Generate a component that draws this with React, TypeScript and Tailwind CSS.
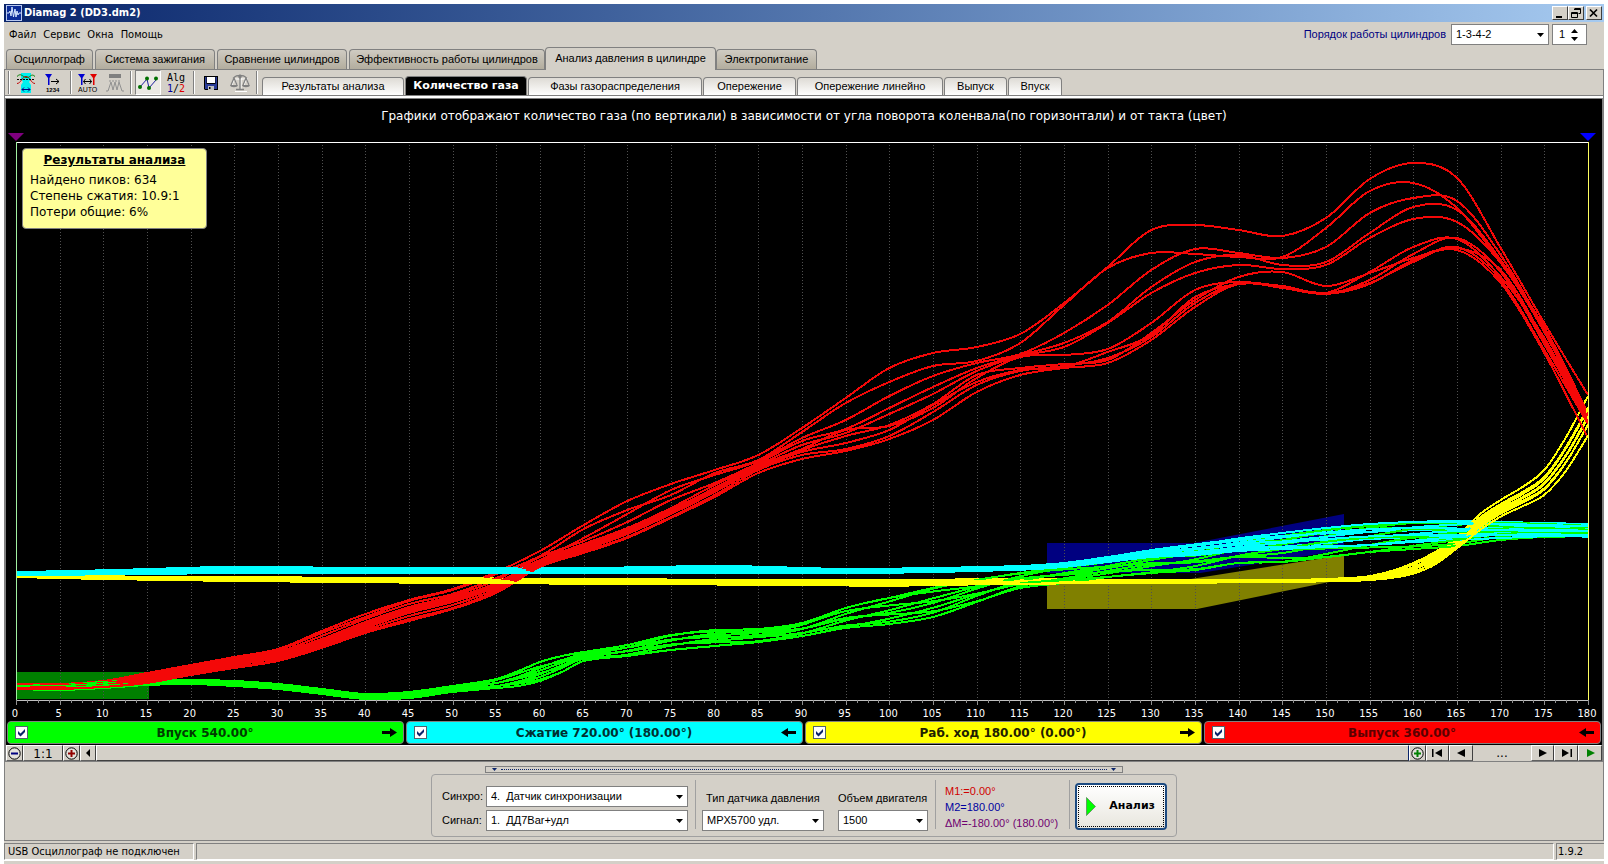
import { ReactNode, SelectHTMLAttributes, useState } from "react";

const MAIN_TABS = [
  { label: "Осциллограф", width: "w-[87px]" },
  { label: "Система зажигания", width: "w-[120px]" },
  { label: "Сравнение цилиндров", width: "w-[130px]" },
  { label: "Эффективность работы цилиндров", width: "w-[196px]" },
  { label: "Анализ давления в цилиндре", width: "w-[171px]" },
  { label: "Электропитание", width: "w-[101px]" },
];

const SUB_TABS = [
  { label: "Результаты анализа", width: "w-[142px]" },
  { label: "Количество газа", width: "w-[122px]" },
  { label: "Фазы газораспределения", width: "w-[174px]" },
  { label: "Опережение", width: "w-[93px]" },
  { label: "Опережение линейно", width: "w-[146px]" },
  { label: "Выпуск", width: "w-[63px]" },
  { label: "Впуск", width: "w-[54px]" },
];

const STROKES = [
  { label: "Впуск 540.00°", bg: "bg-[#00ff00]", text: "text-[#003c00]", dir: "right" },
  { label: "Сжатие 720.00° (180.00°)", bg: "bg-[#00ffff]", text: "text-[#003030]", dir: "left" },
  { label: "Раб. ход 180.00° (0.00°)", bg: "bg-[#ffff00]", text: "text-[#202000]", dir: "right" },
  { label: "Выпуск 360.00°", bg: "bg-[#ff0000]", text: "text-[#5a0000]", dir: "left" },
];

// plot geometry, px
const PLOT_W = 1572;
const PLOT_TOP = 142;
const PLOT_BOTTOM = 700;
const STEP = PLOT_W / 36; // 5 degrees
const CYCLES = 10;

type Point = [deg: number, y: number];
type Band = [deg: number, upper: number, lower: number][];

// exhaust stroke, one row per cycle, one sample per 5 degrees
const EXHAUST = [
  [684, 684, 681, 673, 665, 657, 649, 631, 614, 600, 589, 572, 551, 525, 501, 484, 470, 455, 428, 398, 368, 353, 347, 334, 303, 267, 230, 225, 230, 236, 218, 179, 163, 178, 248, 323, 395],
  [685, 685, 682, 675, 667, 659, 650, 633, 617, 601, 590, 574, 556, 529, 510, 495, 473, 460, 432, 403, 382, 366, 361, 343, 305, 268, 253, 254, 257, 257, 228, 191, 183, 208, 263, 327, 413],
  [686, 685, 683, 677, 668, 660, 652, 636, 619, 604, 594, 578, 560, 538, 514, 490, 475, 461, 438, 420, 396, 376, 363, 354, 333, 305, 270, 249, 253, 258, 247, 213, 198, 201, 255, 330, 416],
  [685, 686, 684, 678, 669, 661, 653, 639, 622, 607, 596, 580, 557, 541, 522, 500, 483, 463, 441, 429, 408, 387, 368, 355, 343, 322, 287, 262, 255, 265, 262, 233, 207, 210, 260, 330, 417],
  [686, 686, 684, 679, 670, 662, 654, 641, 624, 609, 598, 583, 560, 544, 528, 508, 485, 465, 445, 433, 414, 394, 371, 356, 347, 323, 293, 273, 265, 269, 265, 238, 219, 222, 263, 332, 418],
  [687, 687, 685, 679, 671, 663, 655, 642, 626, 611, 600, 585, 562, 546, 530, 510, 488, 466, 449, 430, 426, 408, 378, 357, 355, 349, 323, 290, 282, 287, 293, 272, 247, 239, 277, 338, 420],
  [687, 687, 685, 680, 672, 664, 656, 643, 628, 613, 602, 587, 563, 548, 532, 512, 490, 467, 450, 436, 425, 404, 375, 368, 364, 360, 333, 300, 277, 272, 286, 273, 258, 248, 270, 340, 421],
  [688, 688, 686, 681, 673, 665, 658, 645, 630, 616, 605, 589, 564, 550, 534, 514, 492, 468, 452, 443, 430, 405, 382, 370, 367, 352, 335, 297, 284, 286, 294, 280, 254, 238, 272, 344, 422],
  [688, 688, 687, 682, 674, 667, 660, 647, 632, 619, 608, 591, 566, 552, 537, 517, 495, 470, 455, 449, 436, 412, 385, 371, 366, 358, 337, 303, 283, 287, 293, 283, 262, 247, 280, 350, 424],
  [689, 689, 687, 683, 675, 668, 661, 648, 633, 621, 609, 593, 567, 553, 538, 518, 497, 473, 459, 451, 439, 420, 392, 375, 368, 363, 340, 307, 284, 288, 294, 284, 260, 250, 283, 353, 438],
];

// the other strokes are bundles: degrees, upper edge, lower edge
const INTAKE: Band = [
  [0, 685, 689], [5, 685, 690], [10, 682, 688], [15, 680, 685], [20, 680, 684], [25, 681, 686], [30, 684, 689],
  [35, 689, 694], [40, 694, 699], [45, 692, 698], [50, 686, 692], [55, 679, 688], [57.5, 671, 686], [60, 662, 681],
  [62.5, 656, 672], [65, 652, 661], [70, 645, 656], [75, 635, 650], [80, 630, 646], [85, 629, 642], [90, 623, 636],
  [95, 608, 628], [100, 598, 624], [105, 588, 617], [110, 580, 602], [115, 573, 588], [120, 567, 583],
  [125, 562, 577], [130, 554, 573], [135, 550, 570], [140, 543, 563], [145, 536, 562], [150, 530, 557],
  [155, 526, 552], [160, 523, 549], [165, 523, 546], [170, 523, 540], [175, 524, 537], [180, 525, 536],
];

const COMPRESSION: Band = [
  [0, 572, 575], [15, 569, 574], [25, 567, 573], [60, 568, 573], [80, 566, 573], [95, 569, 573], [105, 568, 572],
  [115, 566, 570], [120, 563, 567], [125, 557, 562], [130, 550, 557], [135, 544, 555], [140, 538, 551],
  [145, 533, 549], [150, 528, 547], [155, 524, 545], [160, 522, 542], [165, 521, 540], [170, 522, 538],
  [175, 523, 537], [180, 524, 537],
];

const POWER: Band = [
  [0, 573, 577], [10, 576, 579], [25, 577, 581], [45, 578, 583], [70, 579, 584], [90, 580, 585], [100, 580, 586],
  [115, 579, 584], [130, 580, 583], [145, 580, 582], [152.5, 578, 581], [155, 576, 580], [157.5, 571, 578],
  [160, 563, 574], [162.5, 552, 565], [165, 537, 549], [167.5, 515, 532], [170, 500, 518], [172.5, 487, 508],
  [175, 470, 497], [177.5, 437, 473], [180, 396, 438],
];

const EVEN = [0, 0.11, 0.22, 0.33, 0.44, 0.56, 0.67, 0.78, 0.89, 1];
const CENTERED = [0, 0.2, 0.3, 0.38, 0.45, 0.5, 0.56, 0.62, 0.7, 1];

function xOf(deg: number) {
  return (deg * STEP) / 5;
}

function curve(points: Point[]) {
  const p = points.map(([deg, y]) => [xOf(deg), y]);
  const last = p.length - 1;
  const slope = (i: number) => {
    const a = p[Math.max(i - 1, 0)];
    const b = p[Math.min(i + 1, last)];
    return (b[1] - a[1]) / (b[0] - a[0]);
  };
  let d = `M${p[0][0]} ${p[0][1]}`;
  for (let i = 0; i < last; i++) {
    const h = (p[i + 1][0] - p[i][0]) / 3;
    d += `C${(p[i][0] + h).toFixed(1)} ${(p[i][1] + slope(i) * h).toFixed(1)} `;
    d += `${(p[i + 1][0] - h).toFixed(1)} ${(p[i + 1][1] - slope(i + 1) * h).toFixed(1)} `;
    d += `${p[i + 1][0].toFixed(1)} ${p[i + 1][1].toFixed(1)}`;
  }
  return d;
}

// place one cycle between the edges of its bundle, with a slow drift so cycles cross
function fromBand(band: Band, cycle: number, weights: number[], drift: number) {
  return band.map(([deg, upper, lower]): Point => {
    const w = weights[cycle] + drift * Math.sin(deg * 0.1 + cycle * 2.1);
    return [deg, upper + (lower - upper) * Math.min(1, Math.max(0, w))];
  });
}

export default function App() {
  const [mainTab, setMainTab] = useState(4);
  const [subTab, setSubTab] = useState(1);

  return (
    <div className="min-h-screen bg-white px-1 pt-1 font-['Liberation_Sans',Arial,sans-serif] text-[11px] text-black">
      <div className="flex min-h-[860px] flex-col bg-[#d4d0c8] pb-[3px]">
        <TitleBar />
        <MenuBar />

        <nav className="flex h-[22px] items-end gap-0.5 pl-0.5">
          {MAIN_TABS.map((t, i) => (
            <button
              key={t.label}
              onClick={() => setMainTab(i)}
              className={`${t.width} shrink-0 whitespace-nowrap rounded-t border border-b-0 border-[#808080] text-center ${
                i === mainTab
                  ? "relative -mx-0.5 -mb-px h-[23px] bg-[#d4d0c8] pb-0.5"
                  : "h-5 bg-linear-to-b from-[#cfcbc2] to-[#b3ad9e]"
              }`}
            >
              {t.label}
            </button>
          ))}
        </nav>

        <main className="flex flex-1 flex-col border border-[#808080]">
          <div className="flex h-[25px] shrink-0">
            <Toolbar />
            <nav className="flex items-end gap-px pl-1">
              {SUB_TABS.map((t, i) => (
                <button
                  key={t.label}
                  onClick={() => setSubTab(i)}
                  className={`${t.width} shrink-0 whitespace-nowrap rounded-t border border-b-0 border-[#808080] ${
                    i === subTab
                      ? "h-[19px] bg-black font-['DejaVu_Sans'] font-bold text-white"
                      : "h-[18px] bg-linear-to-b from-[#dedbd5] to-white"
                  }`}
                >
                  {t.label}
                </button>
              ))}
            </nav>
          </div>
          <div className="h-1 shrink-0 border-y border-[#808080] bg-white" />

          <section className="relative border-x border-[#808080] bg-black">
            <h1 className="flex h-[31px] items-center justify-center pt-0.5 font-['DejaVu_Sans'] text-xs text-white">
              Графики отображают количество газа (по вертикали) в зависимости от угла поворота коленвала(по горизонтали) и от такта (цвет)
            </h1>
            <Chart />
            <ResultsNote />
            <div className="flex gap-0.5 px-px pb-px">
              {STROKES.map((s) => (
                <label
                  key={s.label}
                  className={`flex h-[23px] flex-1 items-center rounded border border-[#808080] px-1.5 ${s.bg}`}
                >
                  <span className="relative ml-px flex size-[13px]">
                    <input
                      type="checkbox"
                      defaultChecked
                      className="peer size-[13px] appearance-none border border-[#50646e] bg-white"
                    />
                    <svg viewBox="0 0 13 13" className="pointer-events-none absolute inset-0 hidden size-[13px] peer-checked:block">
                      <path d="M3 5v3l2.500 2.500L10 6V3L5.500 7.500z" fill="#0a246a" />
                    </svg>
                  </span>
                  <span className={`flex-1 text-center font-['DejaVu_Sans'] text-xs font-bold ${s.text}`}>{s.label}</span>
                  <svg viewBox="0 0 15 9" className={`h-[9px] w-[15px] ${s.dir === "left" ? "-scale-x-100" : ""}`}>
                    <path d="M0 3h8V0l7 4.500L8 9V6H0z" fill="#000" />
                  </svg>
                </label>
              ))}
            </div>
          </section>

          <ScrollRow />
          <ControlPanel />
        </main>

        <footer className="mt-0.5 flex h-[18px] shrink-0 gap-0.5 border-b border-white font-['DejaVu_Sans_Condensed','DejaVu_Sans'] leading-4">
          <div className="w-[190px] border border-[#808080] border-r-white border-b-white pl-[3px]">USB Осциллограф не подключен</div>
          <div className="flex-1 border border-[#808080] border-r-white border-b-white" />
          <div className="w-12 border border-r-0 border-[#808080] border-b-white pl-px">1.9.2</div>
        </footer>
      </div>
    </div>
  );
}

function TitleBar() {
  return (
    <header className="flex h-[18px] shrink-0 items-center bg-linear-to-r from-[#0a246a] to-[#a6caf0] pr-0.5">
      <svg viewBox="0 0 16 16" className="ml-0.5 size-4">
        <rect width="16" height="16" fill="#b8c8f0" />
        <rect x="1" y="1" width="14" height="14" fill="#0c2c98" />
        <path d="M1 8h2l1-2 1 5 1-9 1.500 10L9 4l1 8 1-6 1 4 1-2h2" fill="none" stroke="#d8e8ff" strokeWidth="1" />
      </svg>
      <span className="flex-1 pl-0.5 font-['DejaVu_Sans_Condensed','DejaVu_Sans'] font-bold text-white">Diamag 2 (DD3.dm2)</span>
      <WinButton label="Свернуть">
        <path d="M3 9h6v2H3z" fill="#000" />
      </WinButton>
      <WinButton label="Восстановить">
        <path d="M5.500 1.500h6v5h-2M5 2.500h7M2.500 5.500h6v5h-6zM2 6.500h7" fill="none" stroke="#000" />
      </WinButton>
      <span className="w-0.5" />
      <WinButton label="Закрыть">
        <path d="M3 2.500l7 7M10 2.500l-7 7" fill="none" stroke="#000" strokeWidth="1.700" />
      </WinButton>
    </header>
  );
}

function WinButton({ label, children }: { label: string; children: ReactNode }) {
  return (
    <button
      aria-label={label}
      className="h-3.5 w-4 border border-white border-r-[#404040] border-b-[#404040] bg-[#d4d0c8]"
    >
      <svg viewBox="0 0 14 12" className="h-3 w-3.5">
        {children}
      </svg>
    </button>
  );
}

function MenuBar() {
  return (
    <div className="flex h-[25px] shrink-0 items-center justify-between pr-[17px] pl-[5px]">
      <div className="flex gap-[7px] pt-0.5 font-['DejaVu_Sans_Condensed','DejaVu_Sans']">
        {["Файл", "Сервис", "Окна", "Помощь"].map((m) => (
          <button key={m}>{m}</button>
        ))}
      </div>
      <div className="flex items-center">
        <label htmlFor="order" className="pr-[5px] text-[#000080]">
          Порядок работы цилиндров
        </label>
        <Select id="order" width="w-[98px]" options={["1-3-4-2", "1-2-4-3"]} />
        <div className="ml-[3px] flex h-[21px] w-[35px] border border-[#808080] bg-white">
          <input aria-label="Цилиндр" defaultValue="1" className="w-[18px] bg-transparent pl-1.5 outline-none" />
          <div className="flex flex-col items-center justify-center gap-1">
            <button aria-label="Больше">
              <svg viewBox="0 0 7 4" className="h-1 w-[7px]">
                <path d="M0 4h7L3.500 0z" />
              </svg>
            </button>
            <button aria-label="Меньше">
              <svg viewBox="0 0 7 4" className="h-1 w-[7px]">
                <path d="M0 0h7L3.500 4z" />
              </svg>
            </button>
          </div>
        </div>
      </div>
    </div>
  );
}

type SelectProps = SelectHTMLAttributes<HTMLSelectElement> & { width: string; options: string[] };

function Select({ width, options, ...rest }: SelectProps) {
  return (
    <span className={`relative block ${width}`}>
      <select
        {...rest}
        className="block h-[21px] w-full appearance-none border border-[#808080] bg-white pr-4 pb-px pl-1 outline-none"
      >
        {options.map((o) => (
          <option key={o}>{o}</option>
        ))}
      </select>
      <svg viewBox="0 0 7 4" className="pointer-events-none absolute top-[9px] right-[5px] h-1 w-[7px]">
        <path d="M0 0h7L3.500 4z" />
      </svg>
    </span>
  );
}

function Separator() {
  return <span className="h-[23px] w-0.5 border-r border-l border-[#808080] border-r-white" />;
}

function Tool({ label, width, children }: { label: string; width: string; children: ReactNode }) {
  return (
    <button aria-label={label} className={`flex h-6 shrink-0 items-center justify-center ${width}`}>
      {children}
    </button>
  );
}

function Toolbar() {
  return (
    <div className="flex w-[253px] shrink-0 items-center pl-[3px]">
      <Separator />
      <Tool label="Метки" width="w-[32px]">
        <svg viewBox="0 0 18 20" className="h-5 w-[18px]">
          <path d="M4 0h10v6l-2 3 2 3v8H4v-8l2-3-2-3z" fill="#00f0f0" />
          <path d="M0 3.500c4-4 5 0 9 1s5-5 9-1" fill="none" stroke="#008000" />
          <path d="M0 10.500c4 0 5-7 9-7s5 7 9 7" fill="none" stroke="#c00000" />
          <path d="M0 6.500h18" stroke="#000" strokeDasharray="2 1" />
          <path d="M5 16.500h8M7 14.500l-2 2 2 2M11 14.500l2 2-2 2" fill="none" stroke="#000080" />
        </svg>
      </Tool>
      <Tool label="Порядок" width="w-[22px]">
        <svg viewBox="0 0 16 20" className="h-5 w-4">
          <path d="M0 1h7L4.500 5v7H3V5z" fill="#0000d0" />
          <path d="M6 8.500h8M11 6l3 2.500-3 2.500" fill="none" stroke="#000" />
          <text x="1" y="19" fontSize="6" fontWeight="bold" fontFamily="Liberation Sans">1234</text>
        </svg>
      </Tool>
      <span className="w-[7px]" />
      <Separator />
      <Tool label="Авто" width="w-8">
        <svg viewBox="0 0 20 20" className="h-5 w-5">
          <path d="M0 1h7L4.500 5v7H3V5z" fill="#0000d0" />
          <path d="M12 1h7l-2.500 4v7H15V5z" fill="#e00000" />
          <path d="M5.500 8.500h8M7.500 6l-2 2.500 2 2.500M11.500 6l2 2.500-2 2.500" fill="none" stroke="#000" />
          <text x="0" y="19" fontSize="7" fontFamily="Liberation Sans">AUTO</text>
        </svg>
      </Tool>
      <Tool label="Спектр" width="w-[22px]">
        <svg viewBox="0 0 18 18" className="h-[18px] w-[18px]">
          <path d="M3 0h12v4H3z" fill="#808080" />
          <path d="M0 17h2l3-9 2 8 2-8 2 8 2-8 3 9h2M4 6v2M7 6v2M10 6v2M13 6v2" fill="none" stroke="#909090" />
        </svg>
      </Tool>
      <span className="w-[5px]" />
      <Separator />
      <button
        aria-label="Графики"
        aria-pressed="true"
        className="ml-[3px] flex h-[25px] w-[26px] shrink-0 items-center justify-center border border-[#808080] border-r-white border-b-white bg-[#ebe9e4]"
      >
        <svg viewBox="0 0 20 14" className="h-3.5 w-5">
          <path d="M2 11L9 3l2 9 7-8" fill="none" stroke="#2020a0" />
          <g fill="#007000">
            <circle cx="2" cy="11" r="2" />
            <circle cx="9" cy="2.500" r="2" />
            <circle cx="11" cy="12" r="2" />
            <circle cx="18" cy="2.500" r="2" />
          </g>
        </svg>
      </button>
      <Tool label="Алгоритм" width="w-[30px]">
        <span className="flex flex-col items-center font-['DejaVu_Sans_Mono'] text-[10px] leading-[11px]">
          <span>Alg</span>
          <span>
            <span className="text-[#0000a0]">1</span>/<span className="text-[#e00000]">2</span>
          </span>
        </span>
      </Tool>
      <span className="w-0.5" />
      <Separator />
      <Tool label="Сохранить" width="w-8">
        <svg viewBox="0 0 14 14" className="size-3.5">
          <path d="M0 0h14v14H1l-1-1z" fill="#000" />
          <path d="M1 1h1.500v7h9V1H13v12H1z" fill="#2a3c98" />
          <path d="M3 1h8v6H3z" fill="#fff" />
          <path d="M4 10h6v4H4z" fill="#c0c0c0" />
          <path d="M5 11h1.500v2H5z" fill="#000" />
        </svg>
      </Tool>
      <Tool label="Весы" width="w-[26px]">
        <svg viewBox="0 0 20 18" className="h-[18px] w-5" fill="none">
          <path d="M11 2v14M5 17.500h12M4 5l14 0M4.500 5l-3 7M4.500 5l3 7M16.500 5l-3 7M16.500 5l3 7" stroke="#fff" />
          <path d="M10 1v14M6 15.500h8M3 4.500c3-3 4-3 7-3s4 0 7 3M4 4L1 11M4 4l3 7M16 4l-3 7M16 4l3 7" stroke="#808080" strokeWidth="1.300" />
          <path d="M0 11h8c0 3-8 3-8 0zM12 11h8c0 3-8 3-8 0zM8 3l2-3 2 3-2 2z" fill="#808080" />
        </svg>
      </Tool>
      <span className="w-1" />
      <Separator />
    </div>
  );
}

function Chart() {
  const majors = Array.from({ length: 37 }, (_, i) => i);
  const cycles = Array.from({ length: CYCLES }, (_, i) => i);

  return (
    <svg viewBox="-10 130 1596 591" className="block w-full">
      <path d="M0 672h133v27H0z" fill="#008000" />
      <path d="M1031 543h147l150-29v36l-144 23h-153z" fill="#000080" />
      <path d="M1031 579h144l153-24v24l-147 30h-150z" fill="#808000" />

      {majors.slice(1, 36).map((i) => (
        <path key={i} d={`M${Math.round(i * STEP) + 0.5} ${PLOT_TOP}V${PLOT_BOTTOM}`} stroke="#505050" strokeDasharray="1 2" />
      ))}

      <g fill="none" strokeWidth="2" shapeRendering="crispEdges">
        {cycles.map((i) => (
          <g key={i}>
            <path d={curve(fromBand(INTAKE, i, EVEN, 0.35))} stroke="#00ff00" />
            <path d={curve(EXHAUST[i].map((y, n) => [n * 5, y]))} stroke="#f40808" />
            <path d={curve(fromBand(COMPRESSION, i, EVEN, 0.2))} stroke="#00ffff" />
            <path d={curve(fromBand(POWER, i, CENTERED, 0.08))} stroke="#ffff00" />
          </g>
        ))}
      </g>

      <path d={`M0 ${PLOT_TOP + 0.5}H${PLOT_W}`} stroke="#fff" />
      <path d={`M0.500 ${PLOT_TOP}V${PLOT_BOTTOM}`} stroke="#a0f0a0" />
      <path d={`M${PLOT_W + 0.5} ${PLOT_TOP}V${PLOT_BOTTOM}`} stroke="#ffff60" />
      <path d={`M0 ${PLOT_BOTTOM + 0.5}H${PLOT_W}`} stroke="#c0c0c0" />
      <path d="M-8 133H8L0 141z" fill="#800080" />
      <path d={`M${PLOT_W - 8} 133h16l-8 8z`} fill="#0000ff" />

      {Array.from({ length: 145 }, (_, i) => (
        <path
          key={i}
          d={`M${Math.round((i * STEP) / 4) + 0.5} ${PLOT_BOTTOM}v${i % 4 === 0 ? 5 : 3}`}
          stroke="#909090"
        />
      ))}
      {majors.map((i) => (
        <text
          key={i}
          x={i * STEP - 1}
          y="717"
          textAnchor="middle"
          fill="#fff"
          fontSize="11"
          fontFamily="DejaVu Sans Condensed, DejaVu Sans"
        >
          {i * 5}
        </text>
      ))}
    </svg>
  );
}

function ResultsNote() {
  return (
    <div className="absolute top-[49px] left-4 h-[81px] w-[185px] rounded border border-[#808080] bg-[#ffff99] px-[7px] pt-[3px] font-['DejaVu_Sans'] text-xs leading-4">
      <h2 className="mb-1 text-center font-bold underline">Результаты анализа</h2>
      <p>Найдено пиков: 634</p>
      <p>Степень сжатия: 10.9:1</p>
      <p>Потери общие: 6%</p>
    </div>
  );
}

const CELL = "flex h-4 shrink-0 items-center justify-center border border-white border-r-[#404040] border-b-[#606060]";

function ZoomIcon({ color, plus }: { color: string; plus?: boolean }) {
  return (
    <svg viewBox="0 0 13 13" className="size-[13px]">
      <circle cx="6.500" cy="6.500" r="5.700" fill="#e4e2dc" stroke="#000" />
      <path d={plus ? "M3 6.500h7M6.500 3v7" : "M3 6.500h7"} stroke={color} strokeWidth="2" />
    </svg>
  );
}

function NavIcon({ d, color = "#000" }: { d: string; color?: string }) {
  return (
    <svg viewBox="0 0 11 8" className="h-2 w-[11px]" fill={color}>
      <path d={d} />
    </svg>
  );
}

function ScrollRow() {
  return (
    <div className="flex h-[17px] shrink-0 border-x border-b border-[#808080]">
      <button aria-label="Уменьшить" className={`${CELL} w-[17px]`}>
        <ZoomIcon color="#000080" />
      </button>
      <button className={`${CELL} w-10 pt-0.5 font-['DejaVu_Sans'] text-xs`}>1:1</button>
      <button aria-label="Увеличить" className={`${CELL} w-[17px]`}>
        <ZoomIcon color="#900000" plus />
      </button>
      <button aria-label="Влево" className={`${CELL} w-4`}>
        <NavIcon d="M7 0v8L3 4z" />
      </button>
      <div className="h-4 flex-1 border border-white border-r-[#0a246a] border-b-[#404040]" />
      <button aria-label="Увеличить по вертикали" className={`${CELL} w-[17px]`}>
        <ZoomIcon color="#008000" plus />
      </button>
      <button aria-label="В начало" className={`${CELL} w-[23px]`}>
        <NavIcon d="M0 0h1.500v8H0zM10 0v8L3 4z" />
      </button>
      <button aria-label="Назад" className={`${CELL} w-6`}>
        <NavIcon d="M9 0v8L1 4z" />
      </button>
      <span className="w-[58px] text-center font-['DejaVu_Sans'] text-xs leading-4">...</span>
      <button aria-label="Вперёд" className={`${CELL} w-[23px]`}>
        <NavIcon d="M2 0v8l8-4z" />
      </button>
      <button aria-label="В конец" className={`${CELL} w-6`}>
        <NavIcon d="M9.500 0H11v8H9.500zM1 0v8l7-4z" />
      </button>
      <button aria-label="Пуск" className={`${CELL} w-6`}>
        <NavIcon d="M2 0v8l8-4z" color="#008000" />
      </button>
    </div>
  );
}

function ControlPanel() {
  return (
    <div className="flex flex-1 flex-col items-center pt-1">
      <div className="flex h-[7px] w-[638px] items-center justify-between border border-[#808080] px-1.5">
        <svg viewBox="0 0 5 3" className="h-[3px] w-[5px]" fill="#0a246a">
          <path d="M0 0h5L2.500 3z" />
        </svg>
        <span className="mx-1 h-px flex-1 border-t border-dotted border-[#0a246a]" />
        <svg viewBox="0 0 5 3" className="h-[3px] w-[5px]" fill="#0a246a">
          <path d="M0 0h5L2.500 3z" />
        </svg>
      </div>
      <form
        className="mt-px flex h-[63px] w-[746px] rounded border border-[#a0a0a0] pr-[9px] pl-2.5 whitespace-nowrap"
        onSubmit={(e) => e.preventDefault()}
      >
        <div className="flex flex-col gap-[3px] pt-[11px]">
          <div className="flex items-center">
            <label htmlFor="sync" className="w-11">Синхро:</label>
            <Select id="sync" width="w-[202px]" options={["4.\u00a0 Датчик синхронизации"]} />
          </div>
          <div className="flex items-center">
            <label htmlFor="signal" className="w-11">Сигнал:</label>
            <Select id="signal" width="w-[202px]" options={["1.\u00a0 ДД7Bar+удл"]} />
          </div>
        </div>
        <Divider className="ml-[7px]" />
        <div className="ml-1.5 flex flex-col pt-[15px]">
          <label htmlFor="sensor" className="h-5 pl-1 leading-4">Тип датчика давления</label>
          <Select id="sensor" width="w-[122px]" options={["MPX5700 удл."]} />
        </div>
        <div className="ml-3.5 flex flex-col pt-[15px]">
          <label htmlFor="volume" className="h-5 leading-4">Объем двигателя</label>
          <Select id="volume" width="w-[90px]" options={["1500"]} />
        </div>
        <Divider className="ml-[7px]" />
        <div className="ml-[9px] flex-1 pt-2 leading-4">
          <p className="text-[#d00000]">M1:=0.00°</p>
          <p className="text-[#0000a0]">M2=180.00°</p>
          <p className="text-[#700070]">ΔM=-180.00° (180.00°)</p>
        </div>
        <Divider className="mr-[5px]" />
        <button className="mt-2 flex h-[47px] w-[92px] items-center rounded-sm border-2 border-[#1c4a80] bg-linear-to-b from-white to-[#e8e6de] p-px font-['DejaVu_Sans'] font-bold">
          <span className="flex h-full w-full items-center justify-between border border-dotted border-black pr-2 pl-[7px]">
            <svg viewBox="0 0 10 19" className="h-[19px] w-2.5">
              <path d="M.5.500v18l9-9z" fill="#00ff00" stroke="#60a060" />
            </svg>
            Анализ
          </span>
        </button>
      </form>
    </div>
  );
}

function Divider({ className }: { className: string }) {
  return <span className={`mt-[5px] h-[49px] w-px shrink-0 bg-[#a0a0a0] ${className}`} />;
}
